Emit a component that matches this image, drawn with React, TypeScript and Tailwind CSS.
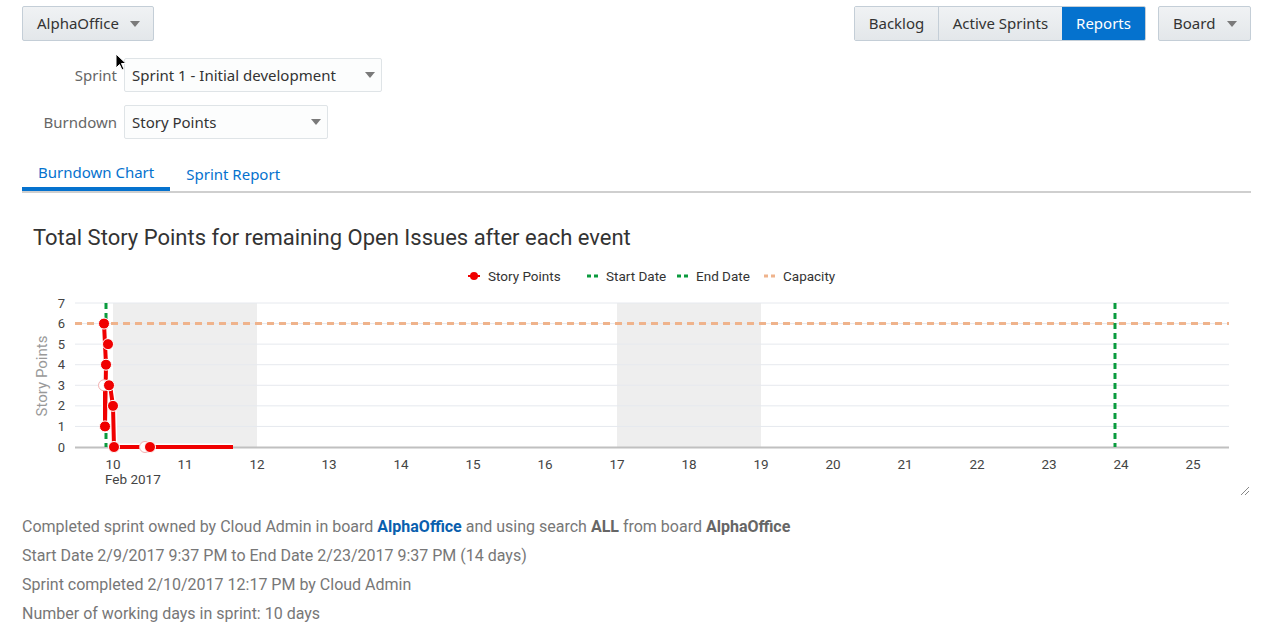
import React from "react";

const UI_FONT = { fontFamily: '"Noto Sans", "Open Sans", sans-serif' };
const CHART_FONT = { fontFamily: 'Roboto, "Liberation Sans", sans-serif' };

const DAY0 = 91; // x of Feb 10
const DAY_W = 72;
const Y0 = 187; // y of 0 points
const Y_UNIT = 144 / 7;

const dayX = (d: number) => DAY0 + (d - 10) * DAY_W;
const valY = (v: number) => Y0 - v * Y_UNIT;

const Caret = () => (
  <svg width="10" height="6" viewBox="0 0 10 6" className="shrink-0">
    <path d="M0 0 L10 0 L5 6 Z" fill="#7a7a7a" />
  </svg>
);

const points: [number, number, boolean?][] = [
  [82, 6],
  [86, 5],
  [84, 4],
  [82, 3, true],
  [87, 3],
  [91, 2],
  [83, 1],
  [92, 0],
  [123, 0, true],
  [128, 0],
];

function Chart() {
  const linePath = [
    [82, valY(6)],
    [84, valY(4)],
    [83, valY(1)],
    [83, valY(3)],
    [88, valY(3)],
    [91, valY(2)],
    [92, valY(0)],
    [211, valY(0)],
  ]
    .map(([x, y], i) => `${i ? "L" : "M"}${x} ${y}`)
    .join(" ");

  return (
    <svg width="1229" height="240" className="block" style={CHART_FONT}>
      {/* weekend bands */}
      <rect x={dayX(10)} y={43} width={DAY_W * 2} height={144} fill="#eeeeee" />
      <rect x={dayX(17)} y={43} width={DAY_W * 2} height={144} fill="#eeeeee" />

      {/* grid */}
      {[1, 2, 3, 4, 5, 6, 7].map((v) => (
        <line key={v} x1={53} x2={1207} y1={valY(v)} y2={valY(v)} stroke="#e6e9ee" strokeWidth={1} />
      ))}
      <line x1={53} x2={1207} y1={Y0 + 0.5} y2={Y0 + 0.5} stroke="#c0c0c0" strokeWidth={2} />

      {/* y labels */}
      {[0, 1, 2, 3, 4, 5, 6, 7].map((v) => (
        <text key={v} x={43} y={valY(v) + 4.5} textAnchor="end" fontSize="13" fill="#444">
          {v}
        </text>
      ))}
      <text
        x={0}
        y={0}
        transform={`translate(25 ${116}) rotate(-90)`}
        textAnchor="middle"
        fontSize="15"
        fill="#999"
      >
        Story Points
      </text>

      {/* x labels */}
      {Array.from({ length: 16 }, (_, i) => 10 + i).map((d) => (
        <text key={d} x={dayX(d)} y={209} textAnchor="middle" fontSize="13.5" fill="#444">
          {d}
        </text>
      ))}
      <text x={83} y={224} fontSize="13.5" fill="#444">
        Feb 2017
      </text>

      {/* capacity */}
      <line x1={53} x2={1207} y1={valY(6)} y2={valY(6)} stroke="#efb38c" strokeWidth={3} strokeDasharray="7 5" />
      {/* start / end dates */}
      <line x1={84} x2={84} y1={43} y2={Y0} stroke="#0a9b3e" strokeWidth={3} strokeDasharray="6 4" />
      <line x1={1093} x2={1093} y1={43} y2={Y0} stroke="#0a9b3e" strokeWidth={3} strokeDasharray="6 4" />

      {/* story points line */}
      <path d={linePath} fill="none" stroke="#ffffff" strokeWidth={7} strokeLinejoin="round" />
      <path d={linePath} fill="none" stroke="#f00000" strokeWidth={4} strokeLinejoin="round" />
      {points.map(([x, y, hollow], i) => (
        <circle
          key={i}
          cx={x}
          cy={valY(y)}
          r={5.5}
          fill={hollow ? "#ffffff" : "#f00000"}
          stroke={hollow ? "#f3b0b0" : "#ffffff"}
          strokeWidth={1}
        />
      ))}

      {/* legend */}
      <line x1={446} x2={458} y1={16} y2={16} stroke="#f00000" strokeWidth={2} />
      <circle cx={452} cy={16} r={4} fill="#f00000" />
      <text x={466} y={20.5} fontSize="13.5" fill="#333">
        Story Points
      </text>
      <line x1={565} x2={577} y1={16} y2={16} stroke="#0a9b3e" strokeWidth={3} strokeDasharray="4 3" />
      <text x={584} y={20.5} fontSize="13.5" fill="#333">
        Start Date
      </text>
      <line x1={655} x2={667} y1={16} y2={16} stroke="#0a9b3e" strokeWidth={3} strokeDasharray="4 3" />
      <text x={674} y={20.5} fontSize="13.5" fill="#333">
        End Date
      </text>
      <line x1={742} x2={754} y1={16} y2={16} stroke="#efb38c" strokeWidth={3} strokeDasharray="4 3" />
      <text x={761} y={20.5} fontSize="13.5" fill="#333">
        Capacity
      </text>

      {/* resize grip */}
      <line x1={1219} x2={1227} y1={235} y2={227} stroke="#888" strokeWidth={1} />
      <line x1={1223} x2={1227} y1={235} y2={231} stroke="#888" strokeWidth={1} />
    </svg>
  );
}

function Select({ value, width }: { value: string; width: string }) {
  return (
    <div
      className={`${width} h-[34px] flex items-center justify-between pl-[7px] pr-[6px] border border-[#dfe4e7] bg-[#fcfdfd] rounded-[2px] text-[15px] text-[#333]`}
    >
      <span>{value}</span>
      <Caret />
    </div>
  );
}

export default function App() {
  return (
    <div
      className="relative w-[1270px] h-[635px] bg-white overflow-hidden pl-[22px] pr-[19px] pt-[6px]"
      style={UI_FONT}
    >
      {/* top bar */}
      <div className="flex items-start justify-between">
        <button className="h-[35px] w-[132px] flex items-center justify-between pl-[14px] pr-[13px] border border-[#c4ced7] rounded-[2px] bg-gradient-to-b from-[#f0f2f4] to-[#e3e7ea] text-[15px] text-[#333]">
          <span>AlphaOffice</span>
          <Caret />
        </button>
        <div className="flex items-center gap-[12px]">
          <div className="flex h-[35px] border border-[#c4ced7] rounded-[2px] overflow-hidden text-[15px]">
            <div className="w-[84px] flex items-center justify-center bg-gradient-to-b from-[#f0f2f4] to-[#e3e7ea] text-[#333] border-r border-[#c4ced7]">
              Backlog
            </div>
            <div className="w-[123px] flex items-center justify-center bg-gradient-to-b from-[#f0f2f4] to-[#e3e7ea] text-[#333]">
              Active Sprints
            </div>
            <div className="w-[83px] flex items-center justify-center bg-[#0572ce] text-white">Reports</div>
          </div>
          <button className="h-[35px] w-[93px] flex items-center justify-between pl-[14px] pr-[13px] border border-[#c4ced7] rounded-[2px] bg-gradient-to-b from-[#f0f2f4] to-[#e3e7ea] text-[15px] text-[#333]">
            <span>Board</span>
            <Caret />
          </button>
        </div>
      </div>

      {/* filters */}
      <div className="mt-[17px] flex flex-col gap-[13px]">
        <div className="flex items-center gap-[7px]">
          <span className="w-[95px] text-right text-[15px] text-[#666]">Sprint</span>
          <Select value="Sprint 1 - Initial development" width="w-[258px]" />
        </div>
        <div className="flex items-center gap-[7px]">
          <span className="w-[95px] text-right text-[15px] text-[#666]">Burndown</span>
          <Select value="Story Points" width="w-[204px]" />
        </div>
      </div>

      {/* tabs */}
      <div className="mt-[19px] flex border-b-2 border-[#cfcfcf] text-[15px] text-[#0572ce]">
        <div className="px-[16px] h-[33px] flex items-center border-b-4 border-[#0572ce] -mb-[2px]">Burndown Chart</div>
        <div className="px-[16px] h-[33px] flex items-center">Sprint Report</div>
      </div>

      {/* chart */}
      <div className="mt-[33px] pl-[11px] text-[22px] leading-[24px] text-[#333]" style={CHART_FONT}>
        Total Story Points for remaining Open Issues after each event
      </div>
      <div className="mt-[10px]">
        <Chart />
      </div>

      {/* details */}
      <div className="mt-[12px] text-[16px] leading-[29px] text-[#777]" style={CHART_FONT}>
        <div>
          Completed sprint owned by Cloud Admin in board{" "}
          <span className="font-bold text-[#0a5fae]">AlphaOffice</span> and using search{" "}
          <span className="font-bold text-[#666]">ALL</span> from board{" "}
          <span className="font-bold text-[#666]">AlphaOffice</span>
        </div>
        <div>Start Date 2/9/2017 9:37 PM to End Date 2/23/2017 9:37 PM (14 days)</div>
        <div>Sprint completed 2/10/2017 12:17 PM by Cloud Admin</div>
        <div>Number of working days in sprint: 10 days</div>
      </div>

      {/* mouse pointer */}
      <svg width="12" height="19" viewBox="0 0 12 19" className="absolute left-[115px] top-[53px]">
        <path d="M1 1 L1 15 L4.5 11.5 L7 17 L9 16 L6.5 10.5 L11 10.5 Z" fill="#000" stroke="#fff" strokeWidth="1" />
      </svg>
    </div>
  );
}
